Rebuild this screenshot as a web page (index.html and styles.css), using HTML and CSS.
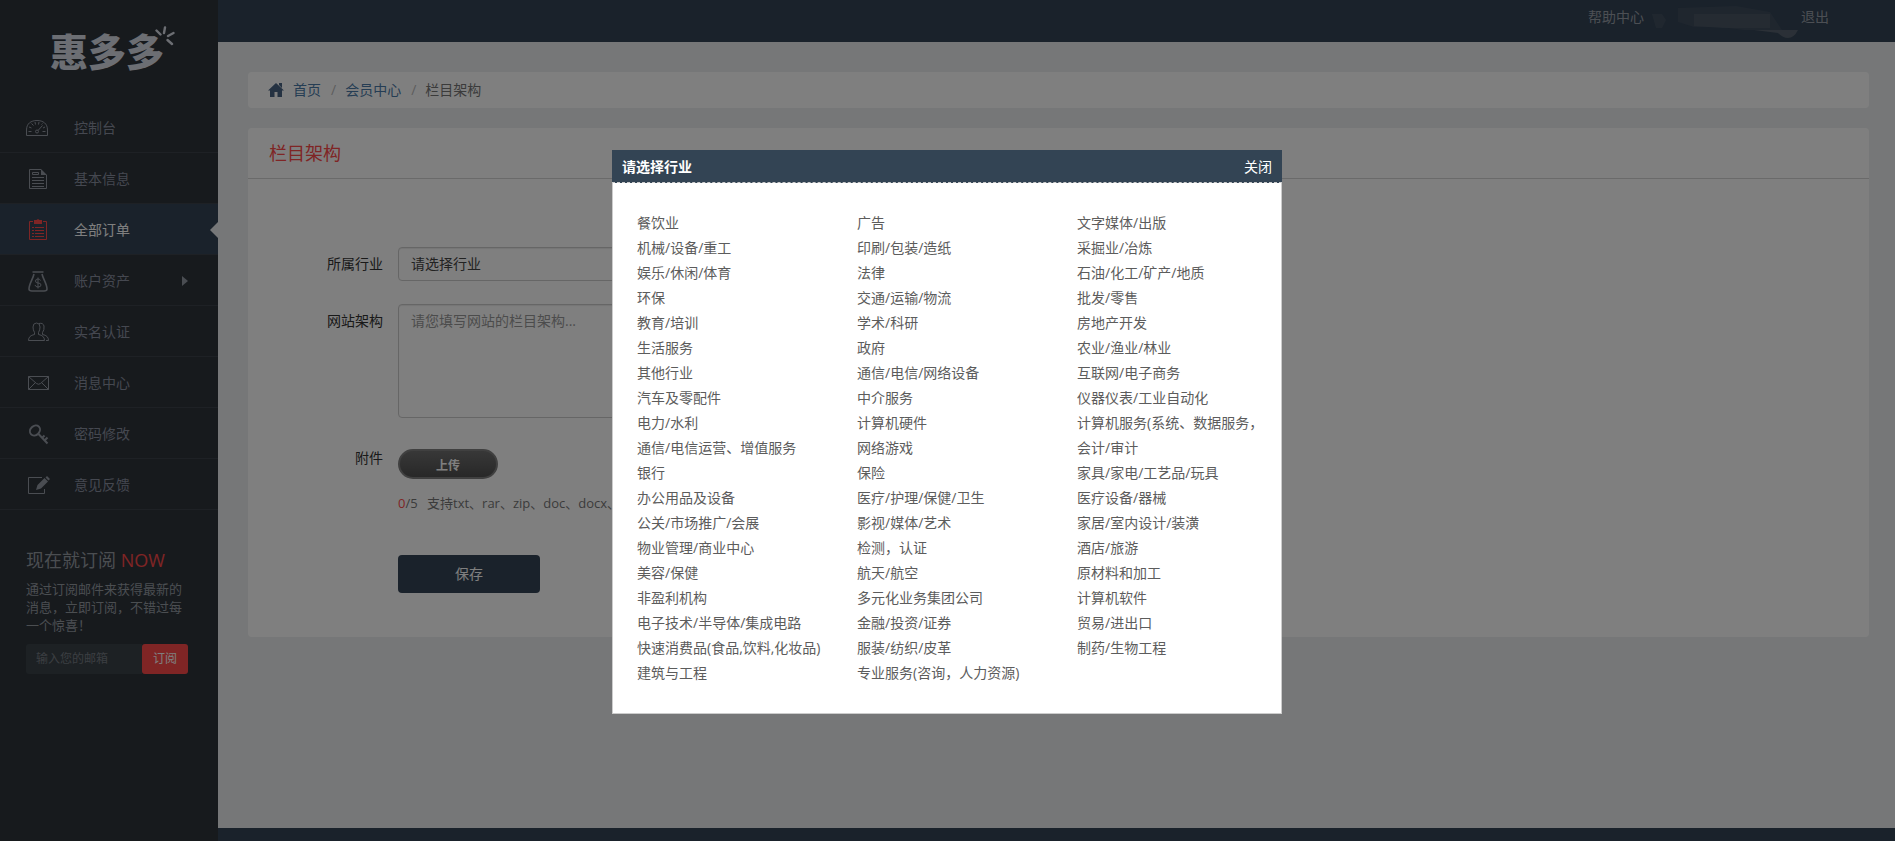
FILE: index.html
```
<!DOCTYPE html>
<html lang="zh-CN">
  <head>
    <meta charset="UTF-8" />
    <meta name="viewport" content="width=device-width, initial-scale=1.0" />
    <title>栏目架构 - 惠多多</title>
    <link rel="stylesheet" href="styles.css">
  </head>
  <body>
    <aside class="sidebar">
      <a class="logo" href="#">
        <span class="logo-text">惠多多</span>
        <svg class="logo-spark" viewBox="0 0 20 20">
          <path d="M1.500 4.500l4 4M10 1.500l-1 5.500M18.500 7l-5.500 3M12.500 14l4.500 4" />
        </svg>
      </a>
      <nav>
        <ul class="nav">
          <li>
            <a href="#">
              <svg class="icon" viewBox="0 0 24 24"><path d="M.5 19.500V14C.5 7.500 5 4.500 11 4.500S21.500 7.500 21.500 14v5.500zM2.500 15.500h3M16.500 15.500h3M3 11l2.500 1M5.500 7.500l2 2M9 6l.5 2.500M13 6l-.5 2.500M16.500 7.500l-1 1M19 11l-2 1M12 14.500l4.500-5" /><circle cx="11" cy="15.500" r="1.500" /></svg>
              <span>控制台</span>
            </a>
          </li>
          <li>
            <a href="#">
              <svg class="icon" viewBox="0 0 24 24"><path d="M15 2.500H3.500v19h17V8M6.500 5.500h6v2h-6zM6 10.500h12M6 13.500h12M6 16.500h12M6 19.500h12" /><path class="fill" d="M15 2l6 6h-6z" /></svg>
              <span>基本信息</span>
            </a>
          </li>
          <li class="active">
            <a href="#">
              <svg class="icon" viewBox="0 0 24 24"><path d="M7 3.500H3.500v18h17v-18H17M6 9.500h2M9 9.500h9M6 12.500h2M9 12.500h9M6 15.500h2M9 15.500h9M6 18.500h2M9 18.500h9" /><path class="fill" d="M8 6V2h2.500L12 1l1.500 1H16v4z" /></svg>
              <span>全部订单</span>
            </a>
          </li>
          <li>
            <a href="#">
              <svg class="icon bag" viewBox="0 0 24 24"><path d="M6.500 3h11M8 5C7 10 3 15 3 20q0 2 3 2h12q3 0 3-2c0-5-4-10-5-15" /><path class="thin" d="M14.500 11.500q-.5-1.500-2.500-1.500-2.500 0-2.500 2t2.500 2q3 0 3 2t-3 2q-2.500 0-3-2M12 8.500v11" /></svg>
              <span>账户资产</span>
              <i class="caret"></i>
            </a>
          </li>
          <li>
            <a href="#">
              <svg class="icon" viewBox="0 0 24 24"><path d="M2.500 20.500q0-5 6-6v-2Q7 10 7 7q0-4 3.500-4T14 7q0 3-1.500 5.500v2q6 1 6 6zM13 3.500q4-1 5 2.500.5 4-1.500 6.500v2q6 1 6 6H20" /></svg>
              <span>实名认证</span>
            </a>
          </li>
          <li>
            <a href="#">
              <svg class="icon" viewBox="0 0 24 24"><path d="M2.500 5.500h20v13h-20zM2.500 5.500l8 7q2 1.500 4 0l8-7M2.500 18.500l7-7M22.500 18.500l-7-7" /></svg>
              <span>消息中心</span>
            </a>
          </li>
          <li>
            <a href="#">
              <svg class="icon thick" viewBox="0 0 24 24"><ellipse cx="9" cy="8.500" rx="5.500" ry="4.500" transform="rotate(-45 9 8.500)" /><path d="M12.500 12l9 9.500M19 18l2.500-2.500M16.500 15.500l2-2" /></svg>
              <span>密码修改</span>
            </a>
          </li>
          <li>
            <a href="#">
              <svg class="icon" viewBox="0 0 24 24"><path d="M16 4.500H2.500v16h16V16" /><path class="fill" d="M10 17l1.500-5 7-7 3.500 3.500-7 7zM19.500 4.500L21 3l3 3-1.500 1.500z" /></svg>
              <span>意见反馈</span>
            </a>
          </li>
        </ul>
      </nav>
      <div class="promo">
        <h2>现在就订阅 <em>NOW</em></h2>
        <p>通过订阅邮件来获得最新的消息，立即订阅，不错过每一个惊喜！</p>
        <form class="subscribe">
          <input type="email" placeholder="输入您的邮箱" aria-label="输入您的邮箱" />
          <button type="button">订阅</button>
        </form>
      </div>
    </aside>

    <div class="page">
      <header class="topbar">
        <a href="#">帮助中心</a>
        <svg class="user" viewBox="0 0 157 42">
          <path d="M8 14h10l4 6-4 8h-6z" opacity=".4" />
          <path d="M34 8l58-2 34 6 12 18H100l-24-3H50L34 22z" opacity=".3" />
          <path d="M50 14h76v14H78l-28-2z" opacity=".5" />
          <path d="M110 30h44q-4 8-10 8-5 0-10-5z" />
        </svg>
        <a href="#">退出</a>
      </header>

      <main class="content">
        <ol class="breadcrumb">
          <li>
            <svg class="home" viewBox="0 0 16 16"><path d="M8 1l8 7.500h-2V15H9.500v-5h-3v5H2V8.500H0zM11 1h3v5l-3-3z" /></svg>
            <a href="#">首页</a>
          </li>
          <li><a href="#">会员中心</a></li>
          <li>栏目架构</li>
        </ol>

        <section class="panel">
          <h1>栏目架构</h1>
          <form class="form">
            <div class="row">
              <label for="industry">所属行业</label>
              <select id="industry">
                <option>请选择行业</option>
              </select>
            </div>
            <div class="row">
              <label for="structure">网站架构</label>
              <textarea id="structure" placeholder="请您填写网站的栏目架构..."></textarea>
            </div>
            <div class="row">
              <label for="upload">附件</label>
              <div class="field">
                <button type="button" class="upload" id="upload">上传</button>
                <p class="hint"><em>0</em>/5 <span>支持txt、rar、zip、doc、docx、</span></p>
                <button type="button" class="save">保存</button>
              </div>
            </div>
          </form>
        </section>
      </main>

      <footer class="footer"></footer>
    </div>

    <div class="overlay">
      <div class="modal" role="dialog" aria-labelledby="modal-title">
        <div class="modal-header">
          <strong id="modal-title">请选择行业</strong>
          <button type="button">关闭</button>
        </div>
        <ul class="industries">
          <li><a href="#">餐饮业</a></li>
          <li><a href="#">广告</a></li>
          <li><a href="#">文字媒体/出版</a></li>
          <li><a href="#">机械/设备/重工</a></li>
          <li><a href="#">印刷/包装/造纸</a></li>
          <li><a href="#">采掘业/冶炼</a></li>
          <li><a href="#">娱乐/休闲/体育</a></li>
          <li><a href="#">法律</a></li>
          <li><a href="#">石油/化工/矿产/地质</a></li>
          <li><a href="#">环保</a></li>
          <li><a href="#">交通/运输/物流</a></li>
          <li><a href="#">批发/零售</a></li>
          <li><a href="#">教育/培训</a></li>
          <li><a href="#">学术/科研</a></li>
          <li><a href="#">房地产开发</a></li>
          <li><a href="#">生活服务</a></li>
          <li><a href="#">政府</a></li>
          <li><a href="#">农业/渔业/林业</a></li>
          <li><a href="#">其他行业</a></li>
          <li><a href="#">通信/电信/网络设备</a></li>
          <li><a href="#">互联网/电子商务</a></li>
          <li><a href="#">汽车及零配件</a></li>
          <li><a href="#">中介服务</a></li>
          <li><a href="#">仪器仪表/工业自动化</a></li>
          <li><a href="#">电力/水利</a></li>
          <li><a href="#">计算机硬件</a></li>
          <li><a href="#">计算机服务(系统、数据服务，</a></li>
          <li><a href="#">通信/电信运营、增值服务</a></li>
          <li><a href="#">网络游戏</a></li>
          <li><a href="#">会计/审计</a></li>
          <li><a href="#">银行</a></li>
          <li><a href="#">保险</a></li>
          <li><a href="#">家具/家电/工艺品/玩具</a></li>
          <li><a href="#">办公用品及设备</a></li>
          <li><a href="#">医疗/护理/保健/卫生</a></li>
          <li><a href="#">医疗设备/器械</a></li>
          <li><a href="#">公关/市场推广/会展</a></li>
          <li><a href="#">影视/媒体/艺术</a></li>
          <li><a href="#">家居/室内设计/装潢</a></li>
          <li><a href="#">物业管理/商业中心</a></li>
          <li><a href="#">检测，认证</a></li>
          <li><a href="#">酒店/旅游</a></li>
          <li><a href="#">美容/保健</a></li>
          <li><a href="#">航天/航空</a></li>
          <li><a href="#">原材料和加工</a></li>
          <li><a href="#">非盈利机构</a></li>
          <li><a href="#">多元化业务集团公司</a></li>
          <li><a href="#">计算机软件</a></li>
          <li><a href="#">电子技术/半导体/集成电路</a></li>
          <li><a href="#">金融/投资/证券</a></li>
          <li><a href="#">贸易/进出口</a></li>
          <li><a href="#">快速消费品(食品,饮料,化妆品)</a></li>
          <li><a href="#">服装/纺织/皮革</a></li>
          <li><a href="#">制药/生物工程</a></li>
          <li><a href="#">建筑与工程</a></li>
          <li><a href="#">专业服务(咨询，人力资源)</a></li>
        </ul>
      </div>
    </div>
  </body>
</html>
```

FILE: styles.css
```
/* styles.css */
* {
  box-sizing: border-box;
}

body {
  margin: 0;
  display: flex;
  min-height: 100vh;
  background-color: #edeff1;
  color: #333;
  font-family: "Open Sans", "Noto Sans CJK SC", sans-serif;
  font-size: 14px;
  line-height: 20px;
}

ul,
ol,
h1,
h2,
p {
  margin: 0;
  padding: 0;
  list-style: none;
  font-weight: normal;
}

a {
  text-decoration: none;
  color: inherit;
}

em {
  font-style: normal;
  color: #ff4a4a;
}

button,
input,
select,
textarea {
  font-family: inherit;
  font-size: 14px;
  line-height: 20px;
}

button {
  border: 0;
  padding: 0;
  cursor: pointer;
}

/* sidebar */
.sidebar {
  flex: none;
  width: 218px;
  background-color: #2e343b;
}

.logo {
  display: flex;
  position: relative;
  height: 102px;
  padding-left: 50px;
  align-items: center;
  color: #d9dde6;
}

.logo-text {
  font-size: 38px;
  line-height: 40px;
  font-weight: 900;
}

.logo-spark {
  position: absolute;
  left: 155px;
  top: 26px;
  width: 20px;
  height: 20px;
  fill: none;
  stroke: #d9dde6;
  stroke-width: 2.4;
  stroke-linecap: round;
}

.nav a {
  display: flex;
  align-items: center;
  gap: 24px;
  height: 51px;
  padding: 1px 0 0 26px;
  border-bottom: 1px solid #3c424a;
  color: #8a90a0;
}

.nav .active a {
  position: relative;
  background-color: #344456;
  color: #fff;
}

.nav .active a::after {
  content: "";
  position: absolute;
  right: 0;
  top: 18px;
  border: 8px solid transparent;
  border-left: 0;
  border-right-color: #edeff1;
}

.icon {
  width: 24px;
  height: 24px;
  fill: none;
  stroke: #949aa4;
  stroke-width: 1;
}

.icon .fill {
  fill: #949aa4;
  stroke: none;
}

.thick {
  stroke-width: 2;
}

.bag {
  stroke-width: 1.6;
}

.bag .thin {
  stroke-width: 1;
}

.active .icon {
  stroke: #ff4a4a;
}

.active .icon .fill {
  fill: #ff4a4a;
}

.caret {
  margin-left: auto;
  margin-right: 30px;
  border: 5px solid transparent;
  border-left: 6px solid #949aa4;
  border-right: 0;
}

.promo {
  padding: 38px 30px 30px 26px;
  color: #969ca3;
}

.promo h2 {
  font-size: 18px;
  line-height: 24px;
}

.promo p {
  margin: 8px 0 10px;
  font-size: 13px;
  line-height: 18px;
}

.subscribe {
  display: flex;
  height: 30px;
}

.subscribe input {
  flex: 1;
  min-width: 0;
  padding: 0 10px;
  border: 0;
  border-radius: 3px 0 0 3px;
  background-color: #3b4349;
  font-size: 12px;
}

.subscribe input::placeholder {
  color: #777d84;
}

.subscribe button {
  width: 46px;
  border-radius: 3px;
  background-color: #ff4a4a;
  color: #fff;
  font-size: 12px;
}

/* page */
.page {
  flex: 1;
  min-width: 0;
  display: flex;
  flex-direction: column;
}

.topbar {
  display: flex;
  justify-content: flex-end;
  height: 42px;
  padding: 7px 66px 0 0;
  background-color: #344456;
  color: #999fa8;
}

.user {
  width: 157px;
  height: 42px;
  margin-top: -7px;
  fill: #56616e;
}

.content {
  flex: 1;
  padding: 30px 26px 30px 30px;
}

.breadcrumb {
  display: flex;
  padding: 8px 20px;
  border-radius: 4px;
  background-color: #fff;
  color: #777;
}

.breadcrumb li {
  display: flex;
  align-items: center;
}

.breadcrumb li + li::before {
  content: "/";
  padding: 0 9px 0 10px;
  color: #bbb;
}

.breadcrumb a {
  color: #4a7aa8;
}

.home {
  width: 16px;
  height: 16px;
  margin-right: 9px;
  fill: #4a6484;
}

.panel {
  margin-top: 20px;
  border-radius: 4px;
  background-color: #fff;
}

.panel h1 {
  padding: 13px 21px;
  border-bottom: 1px solid #d4d4d4;
  font-size: 18px;
  line-height: 24px;
  color: #ff4a4a;
}

.form {
  padding: 68px 20px 44px 0;
}

.row {
  display: flex;
  gap: 15px;
  margin-bottom: 23px;
}

.row:last-child {
  margin-bottom: 0;
}

.row label {
  flex: none;
  width: 135px;
  padding-top: 7px;
  text-align: right;
}

.row select,
.row textarea {
  width: 40%;
  height: 34px;
  padding: 6px 12px;
  border: 1px solid #ccc;
  border-radius: 4px;
  background-color: #fff;
  color: #444;
  appearance: none;
  box-shadow: inset 0 1px 1px rgba(0, 0, 0, 0.08);
}

.row textarea {
  height: 114px;
  resize: none;
}

.row textarea::placeholder {
  color: #999;
}

.upload {
  display: block;
  width: 100px;
  height: 30px;
  margin-top: 8px;
  padding-top: 4px;
  border: 2px solid #808080;
  border-radius: 15px;
  background: linear-gradient(#707070, #505050);
  color: #fff;
  font-size: 12px;
  font-weight: bold;
}

.hint {
  margin: 14px 0 42px;
  font-size: 13px;
  color: #777;
}

.hint span {
  margin-left: 6px;
}

.save {
  display: block;
  width: 142px;
  height: 38px;
  border-radius: 4px;
  background-color: #344456;
  color: #fff;
}

.footer {
  height: 13px;
  background-color: #344456;
}

/* industry picker */
.overlay {
  position: fixed;
  inset: 0;
  padding: 150px 1px 0 0;
  background-color: rgba(0, 0, 0, 0.5);
}

.modal {
  width: 670px;
  margin: 0 auto;
  background-color: #fff;
}

.modal-header {
  display: flex;
  justify-content: space-between;
  align-items: center;
  height: 33px;
  padding: 2px 10px 0;
  border-bottom: 1px dashed #ccc;
  background-color: #334454;
  color: #fff;
}

.modal-header button {
  background: none;
  color: #fff;
}

.industries {
  display: grid;
  grid-template-columns: 220px 220px 1fr;
  padding: 27px 15px 28px 24px;
  border: 1px solid #ccc;
  border-top: 0;
  line-height: 25px;
  color: #5c5c5c;
  white-space: nowrap;
}
```
